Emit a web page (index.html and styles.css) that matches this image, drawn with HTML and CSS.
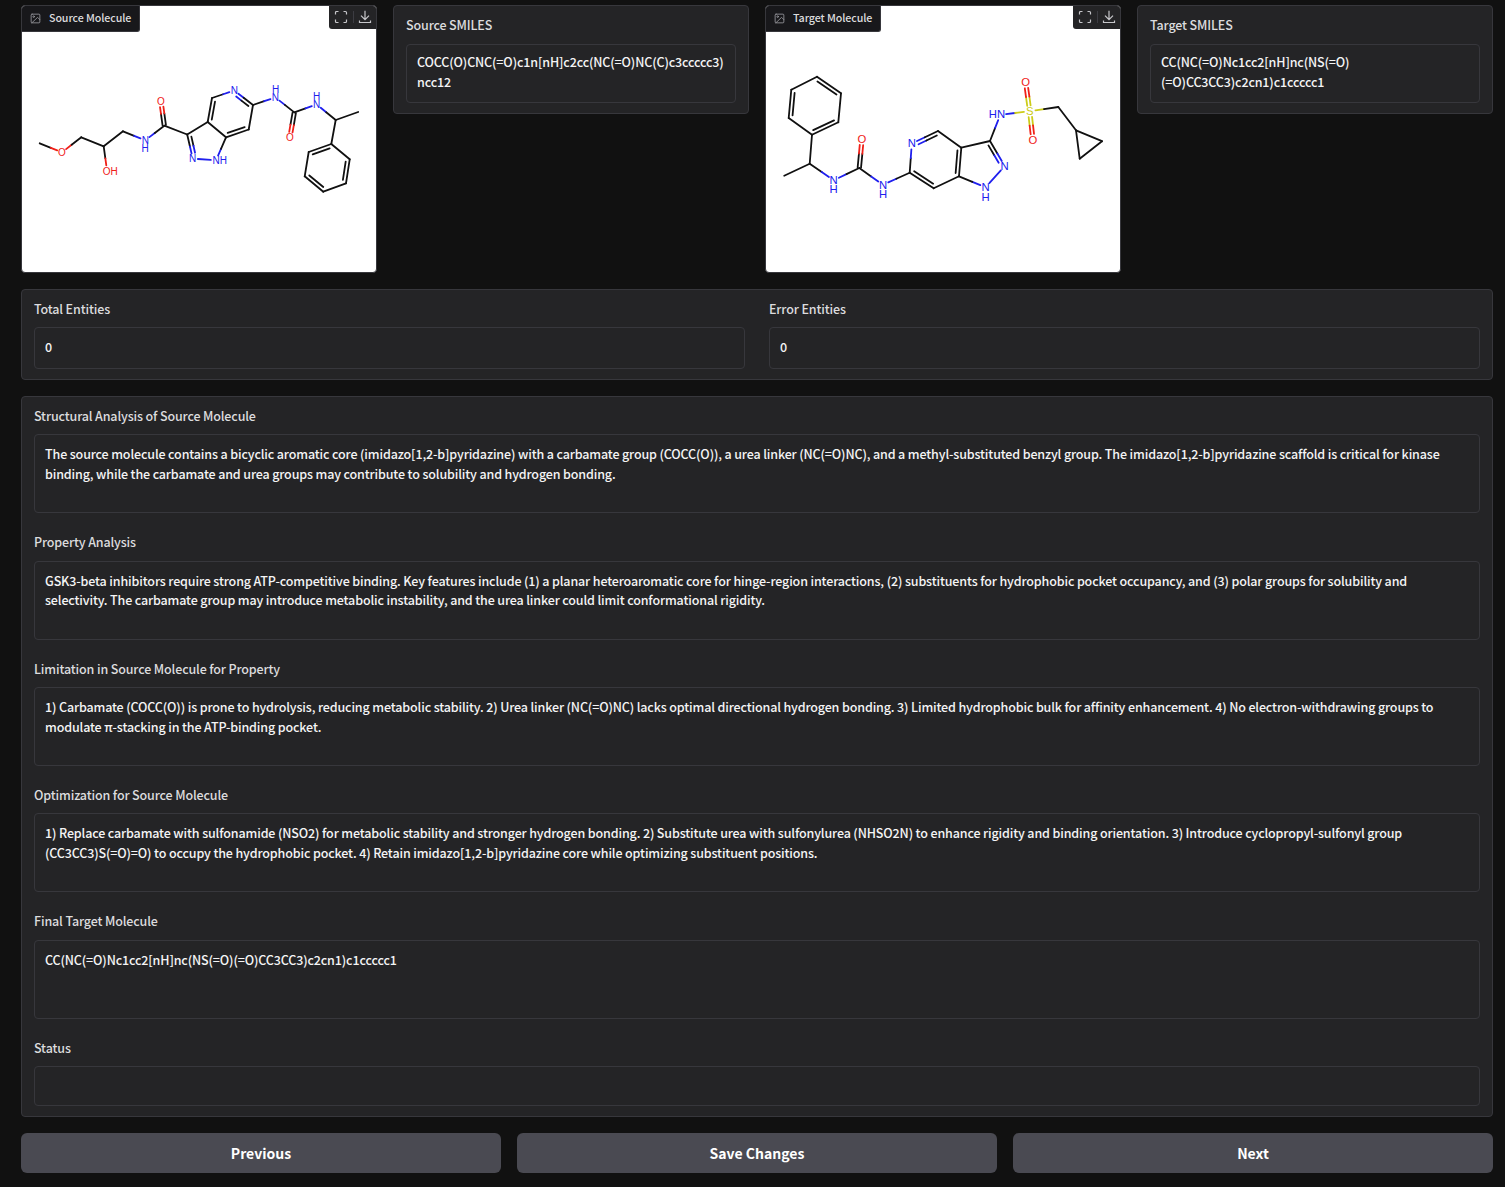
FILE: index.html
```html
<!DOCTYPE html>
<html lang="en">
<head>
<meta charset="utf-8">
<title>Molecule Review</title>
<link rel="stylesheet" href="styles.css">
</head>
<body>
<svg class="sprite" aria-hidden="true">
  <symbol id="icon-image" viewBox="0 0 24 24"><g fill="none" stroke="currentColor" stroke-width="1.9" stroke-linecap="round" stroke-linejoin="round"><rect x="2.5" y="2.5" width="19" height="19" rx="2"/><circle cx="8" cy="8" r="1.7"/><path d="M21.500 14.500l-5-5L4 21.500"/></g></symbol>
  <symbol id="icon-expand" viewBox="0 0 14 14"><path d="M1.5 4.5v-2a1 1 0 0 1 1-1h2M9.5 1.500h2a1 1 0 0 1 1 1v2M12.500 9.500v2a1 1 0 0 1-1 1h-2M4.500 12.500h-2a1 1 0 0 1-1-1v-2" fill="none" stroke="currentColor" stroke-width="1.200"/></symbol>
  <symbol id="icon-download" viewBox="0 0 14 14"><path d="M7 .8v8.700M3 5.700l4 4 4-4M1.500 10.500v2h11v-2" fill="none" stroke="currentColor" stroke-width="1.200"/></symbol>
</svg>
<main class="app">
  <section class="molecules">
    <figure class="viewer">
      <svg class="drawing" id="source-molecule" viewBox="22 6 354 266"></svg>
      <figcaption class="caption"><svg class="caption-icon"><use href="#icon-image"/></svg>Source Molecule</figcaption>
      <div class="tools"><svg class="tool"><use href="#icon-expand"/></svg><i class="divider"></i><svg class="tool"><use href="#icon-download"/></svg></div>
    </figure>
    <div class="panel smiles">
      <div class="field"><div class="label">Source SMILES</div><div class="box">COCC(O)CNC(=O)c1n[nH]c2cc(NC(=O)NC(C)c3ccccc3)<br>ncc12</div></div>
    </div>
    <figure class="viewer">
      <svg class="drawing" id="target-molecule" viewBox="766 6 354 266"></svg>
      <figcaption class="caption"><svg class="caption-icon"><use href="#icon-image"/></svg>Target Molecule</figcaption>
      <div class="tools"><svg class="tool"><use href="#icon-expand"/></svg><i class="divider"></i><svg class="tool"><use href="#icon-download"/></svg></div>
    </figure>
    <div class="panel smiles">
      <div class="field"><div class="label">Target SMILES</div><div class="box">CC(NC(=O)Nc1cc2[nH]nc(NS(=O)<br>(=O)CC3CC3)c2cn1)c1ccccc1</div></div>
    </div>
  </section>
  <section class="panel counts">
    <div class="field"><div class="label">Total Entities</div><div class="box number">0</div></div>
    <div class="field"><div class="label">Error Entities</div><div class="box number">0</div></div>
  </section>
  <section class="panel analysis">
    <div class="field"><div class="label">Structural Analysis of Source Molecule</div><div class="box tall">The source molecule contains a bicyclic aromatic core (imidazo[1,2-b]pyridazine) with a carbamate group (COCC(O)), a urea linker (NC(=O)NC), and a methyl-substituted benzyl group. The imidazo[1,2-b]pyridazine scaffold is critical for kinase<br>binding, while the carbamate and urea groups may contribute to solubility and hydrogen bonding.</div></div>
    <div class="field"><div class="label">Property Analysis</div><div class="box tall">GSK3-beta inhibitors require strong ATP-competitive binding. Key features include (1) a planar heteroaromatic core for hinge-region interactions, (2) substituents for hydrophobic pocket occupancy, and (3) polar groups for solubility and<br>selectivity. The carbamate group may introduce metabolic instability, and the urea linker could limit conformational rigidity.</div></div>
    <div class="field"><div class="label">Limitation in Source Molecule for Property</div><div class="box tall">1) Carbamate (COCC(O)) is prone to hydrolysis, reducing metabolic stability. 2) Urea linker (NC(=O)NC) lacks optimal directional hydrogen bonding. 3) Limited hydrophobic bulk for affinity enhancement. 4) No electron-withdrawing groups to<br>modulate π-stacking in the ATP-binding pocket.</div></div>
    <div class="field"><div class="label">Optimization for Source Molecule</div><div class="box tall">1) Replace carbamate with sulfonamide (NSO2) for metabolic stability and stronger hydrogen bonding. 2) Substitute urea with sulfonylurea (NHSO2N) to enhance rigidity and binding orientation. 3) Introduce cyclopropyl-sulfonyl group<br>(CC3CC3)S(=O)=O) to occupy the hydrophobic pocket. 4) Retain imidazo[1,2-b]pyridazine core while optimizing substituent positions.</div></div>
    <div class="field"><div class="label">Final Target Molecule</div><div class="box tall">CC(NC(=O)Nc1cc2[nH]nc(NS(=O)(=O)CC3CC3)c2cn1)c1ccccc1</div></div>
    <div class="field"><div class="label">Status</div><div class="box"></div></div>
  </section>
  <nav class="actions">
    <button class="action">Previous</button>
    <button class="action">Save Changes</button>
    <button class="action">Next</button>
  </nav>
</main>
<script src="molecules.js"></script>
</body>
</html>
```

FILE: styles.css
```css
* { box-sizing: border-box; }
body {
  margin: 0;
  background: #111111;
  color: #f4f4f5;
  font-family: "Noto Sans CJK SC", "Noto Sans", sans-serif;
  font-size: 12.5px;
  font-weight: 500;
  letter-spacing: -0.137px;
  line-height: 19.6px;
}
.sprite { display: none; }
.app { display: flex; flex-direction: column; gap: 16px; padding: 5px 12px 13px 21px; }
.molecules { display: grid; grid-template-columns: repeat(4, minmax(0, 1fr)); gap: 16px; align-items: start; }
.viewer {
  position: relative;
  height: 268px;
  margin: 0;
  overflow: hidden;
  background: #fff;
  border: 1px solid #37373c;
  border-radius: 4px;
}
.drawing { display: block; width: 354px; height: 266px; }
.atom { font-family: "Liberation Sans", sans-serif; font-weight: 400; letter-spacing: 0; text-anchor: middle; }
.caption {
  position: absolute;
  top: 0;
  left: 0;
  display: flex;
  align-items: center;
  height: 26px;
  padding: 0 8px 1px;
  background: #18181b;
  border: solid #37373c;
  border-width: 0 1px 1px 0;
  border-radius: 0 0 3px 0;
  color: #dcdcde;
  font-size: 10.7px;
  letter-spacing: -0.1px;
}
.caption-icon { width: 11px; height: 11px; margin: 1px 8px 0 0; color: #96969c; }
.tools {
  position: absolute;
  top: 0;
  right: 0;
  display: flex;
  align-items: center;
  gap: 4.5px;
  height: 23px;
  padding: 0 4px 1px 5px;
  background: #242426;
  border-radius: 0 0 0 3px;
  color: #c6c6ca;
}
.tool { width: 14px; height: 14px; }
.divider { width: 1px; height: 12px; background: #3c3c42; }
.panel {
  padding: 0 12px 10.4px;
  background: #242426;
  border: 1px solid #37373c;
  border-radius: 4px;
}
.field { padding-top: 9px; }
.label { margin-bottom: 8.6px; color: #dcdcde; }
.box { min-height: 39.6px; padding: 8.6px 10px 9.4px; border: 1px solid #37373c; border-radius: 4px; white-space: nowrap; }
.tall { min-height: 78.8px; padding-top: 9px; }
.number { height: 41.6px; padding-top: 9px; }
.smiles { padding-bottom: 10px; }
.smiles .label { margin-bottom: 9px; }
.smiles .box { padding: 7.8px 10px 10.2px; }
.counts { display: grid; grid-template-columns: 1fr 1fr; gap: 24px; }
.analysis { display: flex; flex-direction: column; gap: 10.4px; }
.analysis .field { padding-top: 8.6px; }
.analysis .label { margin-bottom: 9px; }
.actions { display: grid; grid-template-columns: repeat(3, 1fr); gap: 16px; }
.action {
  height: 40px;
  padding: 0;
  border: 0;
  border-radius: 6px;
  background: #4a4a52;
  color: #fff;
  font: 700 14px/20px "Noto Sans CJK SC", "Noto Sans", sans-serif;
}
```

FILE: molecules.js
```js
const COLORS = { C: "#111", N: "#2020ee", O: "#f02018", S: "#cccc18" };

// Atoms: [element, x, y]. Labels: [text, x, y, element].
// Bonds: [from, to, kind, side]; kind 2 is a centred double bond, 3 an aromatic one offset to a side.
const SOURCE = {
  size: 10, stroke: 1.8, gap: 5.2,
  atoms: [
    ["C",39.7,143.3],["O",62,152.3],["C",81.3,137.3],["C",103.7,146.3],["O",107,170.5],
    ["C",123,131.3],["N",145.3,140.3],["C",164.3,125.7],["O",161,101.7],["C",187.2,134.5],
    ["N",192.7,158.6],["N",216,160.3],["C",226,137.3],["C",207.7,122],["C",212,98],
    ["N",234.3,90.5],["C",253,105],["C",248.7,129.5],["N",275.4,97.4],["C",294.3,112.4],
    ["O",290,137.3],["N",316.7,104.4],["C",335.7,120],["C",358.2,112],["C",331.3,144],
    ["C",349.7,159.3],["C",346,183.3],["C",323.3,191.7],["C",304.7,176.3],["C",308.7,152]
  ],
  labels: [["O",62,152.3,"O"],["OH",110.3,170.9,"O"],["N",145.3,140.3,"N"],["H",145.2,148.7,"N"],
    ["O",161,101.7,"O"],["N",192.7,158.6,"N"],["NH",219.7,160.3,"N"],["N",234.3,90.5,"N"],
    ["N",275.4,97.7,"N"],["H",275.6,89.6,"N"],["O",290,137.3,"O"],["N",316.7,104.4,"N"],["H",316.7,96.7,"N"]],
  bonds: [[0,1],[1,2],[2,3],[3,4],[3,5],[5,6],[6,7],[7,8,2],[7,9],[9,10,3,-1],[10,11],[11,12],
    [12,13],[13,9],[13,14,3,1],[14,15],[15,16,3,1],[16,17],[17,12,3,1],[16,18],[18,19],[19,20,2],
    [19,21],[21,22],[22,23],[22,24],[24,25],[25,26,3,1],[26,27],[27,28,3,1],[28,29],[29,24,3,1]]
};

const TARGET = {
  size: 11.3, stroke: 1.8, gap: 5.8,
  atoms: [
    ["C",817,76.8],["C",841,93.3],["C",838.3,122.3],["C",812,134.7],["C",788.7,118],["C",791.3,89.7],
    ["C",809.7,163.7],["C",784.2,175.7],["N",833.7,180.3],["C",859.3,168],["O",862,139.3],
    ["N",883,184.8],["C",909.7,172.7],["C",933.7,188.3],["N",911.8,143.5],["C",938,131],
    ["C",961.3,147.7],["C",959,176.3],["C",990,141],["N",1004.7,166],["N",985.7,187.3],
    ["N",1000.3,114.7],["S",1029.7,111.3],["O",1025.7,82.3],["O",1033,139.8],["C",1058.3,107],
    ["C",1076,130.3],["C",1102,141.2],["C",1079.7,158.7]
  ],
  labels: [["N",833.7,180.3,"N"],["H",833.7,189.3,"N"],["O",862,139.3,"O"],["N",883,184.8,"N"],
    ["H",883,193.9,"N"],["N",911.8,143.3,"N"],["N",1004.7,166,"N"],["N",985.7,187.3,"N"],
    ["H",985.7,196.8,"N"],["HN",997,114.4,"N"],["S",1029.7,111.3,"S"],["O",1025.7,82.3,"O"],["O",1033,139.8,"O"]],
  bonds: [[0,1,3,1],[1,2],[2,3,3,1],[3,4],[4,5,3,1],[5,0],[3,6],[6,7],[6,8],[8,9],[9,10,2],[9,11],
    [11,12],[12,13,3,-1],[12,14],[14,15,3,1],[15,16],[16,17,3,1],[17,13],[16,18],[18,19,3,1],
    [19,20],[20,17],[18,21],[21,22],[22,23,2],[22,24,2],[22,25],[25,26],[26,27],[27,28],[28,26]]
};

function draw(id, mol) {
  const parts = [];
  const line = (x1, y1, x2, y2, color) => parts.push(
    `<line x1="${x1.toFixed(2)}" y1="${y1.toFixed(2)}" x2="${x2.toFixed(2)}" y2="${y2.toFixed(2)}" stroke="${color}" stroke-width="${mol.stroke}" stroke-linecap="round"/>`);
  for (const [from, to, kind = 1, side = 1] of mol.bonds) {
    const [e1, x1, y1] = mol.atoms[from];
    const [e2, x2, y2] = mol.atoms[to];
    const len = Math.hypot(x2 - x1, y2 - y1);
    const ux = (x2 - x1) / len, uy = (y2 - y1) / len;
    const stretch = (offset, trim) => {
      const ox = -uy * offset, oy = ux * offset;
      const start = e1 === "C" ? trim : mol.gap;
      const end = len - (e2 === "C" ? trim : mol.gap);
      const mid = len / 2;
      const at = d => [x1 + ux * d + ox, y1 + uy * d + oy];
      if (e1 === e2) line(...at(start), ...at(end), COLORS[e1]);
      else {
        line(...at(start), ...at(mid), COLORS[e1]);
        line(...at(mid), ...at(end), COLORS[e2]);
      }
    };
    if (kind === 2) { stretch(1.7, 0.5); stretch(-1.7, 0.5); }
    else {
      stretch(0, 0);
      if (kind === 3) stretch(3.6 * side, 3);
    }
  }
  for (const [text, x, y, element] of mol.labels) {
    parts.push(`<text class="atom" x="${x}" y="${y + mol.size * 0.36}" font-size="${mol.size}" fill="${COLORS[element]}">${text}</text>`);
  }
  document.getElementById(id).innerHTML = parts.join("");
}

draw("source-molecule", SOURCE);
draw("target-molecule", TARGET);
```
